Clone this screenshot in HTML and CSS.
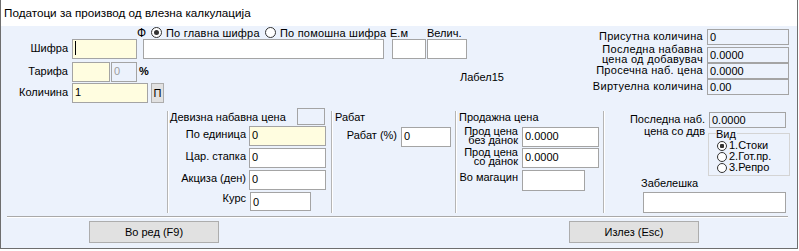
FILE: index.html
```html
<!DOCTYPE html>
<html lang="mk">
<head>
<meta charset="utf-8">
<title>Податоци за производ од влезна калкулација</title>
<link rel="stylesheet" href="styles.css">
</head>
<body>
<div class="window">
  <div class="titlebar">Податоци за производ од влезна калкулација</div>
  <div class="client">
    <div class="top">
      <div class="left">
        <div class="rowa">
          <span class="f">Ф</span>
          <span class="radio r1"><span class="rc on"></span>По главна шифра</span>
          <span class="radio r2"><span class="rc"></span>По помошна шифра</span>
          <span class="em">Е.м</span>
          <span class="vel">Велич.</span>
        </div>
        <div class="row">
          <span class="lab">Шифра</span>
          <div class="tb y w-sif"><span class="caret"></span></div>
          <div class="tb w-big"></div>
          <div class="tb w-em"></div>
          <div class="tb w-vel"></div>
        </div>
        <div class="row row-c">
          <span class="lab">Тарифа</span>
          <div class="tb y w-tar"></div>
          <div class="tb dis w-pct">0</div>
          <span class="pct">%</span>
        </div>
        <div class="row row-d">
          <span class="lab">Количина</span>
          <div class="tb y w-kol">1</div>
          <div class="btn-p">П</div>
        </div>
      </div>
      <div class="lbl15">Лабел15</div>
      <div class="info">
        <span class="ilab">Присутна количина</span>
        <div class="tb itb">0</div>
        <span class="ilab two">Последна набавна<br>цена од добавувач</span>
        <div class="tb itb r2b">0.0000</div>
        <span class="ilab">Просечна наб. цена</span>
        <div class="tb itb">0.0000</div>
        <span class="ilab">Виртуелна количина</span>
        <div class="tb itb">0.00</div>
      </div>
    </div>

    <div class="groups">
      <div class="grp g1">
        <div class="gtitle">Девизна набавна цена<div class="sbox"></div></div>
        <div class="grow first">
          <span class="glab">По единица</span>
          <div class="tb y w77">0</div>
        </div>
        <div class="grow">
          <span class="glab">Цар. стапка</span>
          <div class="tb w77">0</div>
        </div>
        <div class="grow">
          <span class="glab">Акциза (ден)</span>
          <div class="tb w77">0</div>
        </div>
        <div class="grow kurs">
          <span class="glab">Курс</span>
          <div class="tb w61">0</div>
        </div>
      </div>

      <div class="grp g2">
        <div class="gtitle">Рабат</div>
        <div class="grow first2">
          <span class="glab">Рабат (%)</span>
          <div class="tb w50">0</div>
        </div>
      </div>

      <div class="grp g3">
        <div class="gtitle">Продажна цена</div>
        <div class="grow first2">
          <span class="glab two">Прод цена<br>без данок</span>
          <div class="tb w77">0.0000</div>
        </div>
        <div class="grow second">
          <span class="glab two">Прод цена<br>со данок</span>
          <div class="tb w77">0.0000</div>
        </div>
        <div class="grow mag">
          <span class="glab">Во магацин</span>
          <div class="tb w63 h21"></div>
        </div>
      </div>

      <div class="grp g4">
        <div class="g4top">
          <span class="llab">Последна наб.<br>цена со ддв</span>
          <div class="g4col">
            <div class="tb itb w77">0.0000</div>
            <div class="vid">
              <div class="legend">Вид</div>
              <div class="vlist">
                <div class="vr"><span class="vc on"></span>1.Стоки</div>
                <div class="vr"><span class="vc"></span>2.Гот.пр.</div>
                <div class="vr"><span class="vc"></span>3.Репро</div>
              </div>
            </div>
          </div>
        </div>
        <div class="zlab">Забелешка</div>
        <div class="tb zin"></div>
      </div>
    </div>

    <div class="sep"></div>

    <div class="buttons">
      <div class="btn">Во ред (F9)</div>
      <div class="btn b2">Излез (Esc)</div>
    </div>
  </div>
</div>
</body>
</html>
```

FILE: styles.css
```css
* { box-sizing: border-box; }

body {
  margin: 0;
  background: #fff;
  font-family: "Liberation Sans", Arial, sans-serif;
  font-size: 11px;
  color: #000;
}

.window {
  width: 798px;
  height: 249px;
  border: 1px solid #6e6e6e;
  border-top: none;
  background: #ecf2fc;
  display: flex;
  flex-direction: column;
}

.titlebar {
  flex: none;
  height: 26px;
  background: #fff;
  font-size: 11.7px;
  line-height: 26px;
  padding-left: 3px;
}

.client {
  flex: 1;
  display: flex;
  flex-direction: column;
}

/* ---------- generic controls ---------- */
.tb {
  flex: none;
  height: 20px;
  border: 1px solid #a4a4a4;
  background: #fff;
  padding: 1px 2px;
  line-height: 14px;
  white-space: nowrap;
  overflow: hidden;
}
.tb.y { background: #fffde0; }
.tb.dis { background: transparent; color: #9c9c9c; }

.caret {
  display: inline-block;
  width: 1px;
  height: 14px;
  background: #000;
  vertical-align: top;
}

.radio { display: flex; align-items: center; white-space: nowrap; letter-spacing: 0.2px; }
.rc {
  flex: none;
  width: 11px;
  height: 11px;
  border-radius: 50%;
  border: 1px solid #333;
  background: #fff;
  margin-right: 4px;
  display: flex;
  align-items: center;
  justify-content: center;
}
.rc.on::after {
  content: "";
  width: 5px;
  height: 5px;
  border-radius: 50%;
  background: #333;
}

/* ---------- top section ---------- */
.top {
  flex: none;
  height: 80px;
  display: flex;
}

.left { flex: none; width: 459px; }

.rowa {
  height: 13px;
  display: flex;
  align-items: center;
  padding-left: 136px;
  white-space: nowrap;
}
.f { flex: none; width: 14px; font-size: 12px; }
.r1 { flex: none; width: 114px; }
.r2 { flex: none; width: 125px; }
.em { flex: none; width: 37px; }
.vel { flex: none; }

.row {
  display: flex;
  align-items: center;
  height: 20px;
}
.row-c { margin-top: 3px; }
.row-d { margin-top: 1px; }

.lab {
  flex: none;
  width: 67px;
  margin-right: 4px;
  text-align: right;
  padding-bottom: 3px;
}

.w-sif { width: 65px; }
.w-big { width: 241px; margin-left: 6px; }
.w-em { width: 34px; margin-left: 8px; }
.w-vel { width: 40px; margin-left: 1px; }
.w-tar { width: 38px; }
.w-pct { width: 26px; margin-left: 1px; }
.pct { margin-left: 2px; font-weight: bold; padding-bottom: 2px; }
.w-kol { width: 76px; }

.btn-p {
  flex: none;
  width: 13px;
  height: 20px;
  margin-left: 3px;
  background: #e1e1e1;
  border: 1px solid #adadad;
  text-align: center;
  line-height: 18px;
}

.lbl15 {
  flex: none;
  padding-top: 45px;
  line-height: 13px;
}

.info {
  margin-left: auto;
  margin-right: 8px;
  margin-top: 3px;
  display: grid;
  grid-template-columns: auto 82px;
  grid-template-rows: 16px 18px 16px 16px;
  column-gap: 4px;
  align-content: start;
}
.ilab {
  align-self: center;
  text-align: right;
  white-space: nowrap;
  line-height: 13px;
  padding-bottom: 1px;
  letter-spacing: 0.3px;
}
.ilab.two { line-height: 9.5px; align-self: end; padding-bottom: 0; margin-bottom: -1px; }
.itb {
  height: 16px;
  background: transparent;
  padding-top: 0;
  line-height: 15px;
}
.r2b { align-self: end; }

/* ---------- groups ---------- */
.groups {
  flex: none;
  height: 110px;
  display: flex;
  padding-left: 166px;
}

.grp {
  flex: none;
  margin-top: 5px;
  height: 102px;
  border-left: 1px solid #b5b5b5;
  box-shadow: inset 1px 0 #fff;
}
.g1 { width: 164px; }
.g2 { width: 124px; }
.g3 { width: 148px; }
.g4 { flex: 1; display: flex; flex-direction: column; }

.gtitle {
  display: flex;
  align-items: center;
  height: 17px;
  margin-top: -3px;
  padding-left: 3px;
  white-space: nowrap;
}
.g1 .gtitle { padding-left: 2px; }

.sbox {
  width: 28px;
  height: 17px;
  margin-left: auto;
  margin-right: 6px;
  border: 1px solid #a4a4a4;
}

.grow {
  display: flex;
  align-items: center;
  height: 20px;
  margin-top: 2px;
}
.grow.first { margin-top: 1px; }
.grow.first2 { margin-top: 2px; }
.grow.second { margin-top: 1px; }

.glab {
  flex: none;
  text-align: right;
  white-space: nowrap;
  line-height: 13px;
  padding-bottom: 3px;
}
.g1 .glab { width: 78px; margin-right: 3px; }
.g2 .glab { width: 65px; margin-right: 4px; }
.g3 .glab { width: 62px; margin-right: 4px; }
.glab.two { line-height: 9.5px; padding-bottom: 2px; }

.kurs { height: 19px; }
.kurs .glab { padding-bottom: 7px; }
.kurs .tb { height: 19px; margin-left: 1px; padding-top: 2px; }

.mag { align-items: flex-start; height: 21px; }
.mag .glab { padding-top: 1px; padding-bottom: 0; }

.w77 { width: 77px; }
.w61 { width: 61px; }
.w50 { width: 50px; }
.w63 { width: 63px; }
.h21 { height: 21px; }

.g4top {
  display: flex;
  margin-top: 1px;
}
.llab {
  flex: none;
  width: 101px;
  margin-right: 4px;
  text-align: right;
  line-height: 12px;
  padding-top: 1px;
  white-space: nowrap;
}
.g4col { display: flex; flex-direction: column; }

.vid {
  margin-top: 5px;
  margin-left: -1px;
  width: 82px;
  height: 43px;
  border: 1px solid #d4d4d4;
  padding-left: 7px;
}
.legend {
  margin-top: -6px;
  width: fit-content;
  padding: 0 1px 0 0;
  background: #ecf2fc;
  line-height: 13px;
}
.vlist { margin-top: -1px; }
.vr {
  display: flex;
  align-items: center;
  height: 11px;
  line-height: 11px;
  white-space: nowrap;
}
.vc {
  flex: none;
  width: 10px;
  height: 10px;
  border-radius: 50%;
  border: 1px solid #333;
  background: #fff;
  margin: 0 2px 0 1px;
  display: flex;
  align-items: center;
  justify-content: center;
}
.vc.on::after {
  content: "";
  width: 4px;
  height: 4px;
  border-radius: 1px;
  background: #333;
}

.zlab {
  margin-top: 1px;
  padding-left: 37px;
  line-height: 13px;
}
.zin {
  margin-top: 2px;
  margin-left: 39px;
  width: 143px;
  height: 21px;
}

/* ---------- separator & buttons ---------- */
.sep {
  flex: none;
  height: 2px;
  margin: 0 9px 0 6px;
  border-top: 1px solid #a9a9a9;
  border-bottom: 1px solid #fff;
}

.buttons {
  flex: none;
  display: flex;
  margin-top: 3px;
  padding-left: 88px;
}
.btn {
  flex: none;
  width: 130px;
  height: 22px;
  background: #e1e1e1;
  border: 1px solid #adadad;
  text-align: center;
  line-height: 20px;
}
.btn.b2 { margin-left: 350px; }
```
